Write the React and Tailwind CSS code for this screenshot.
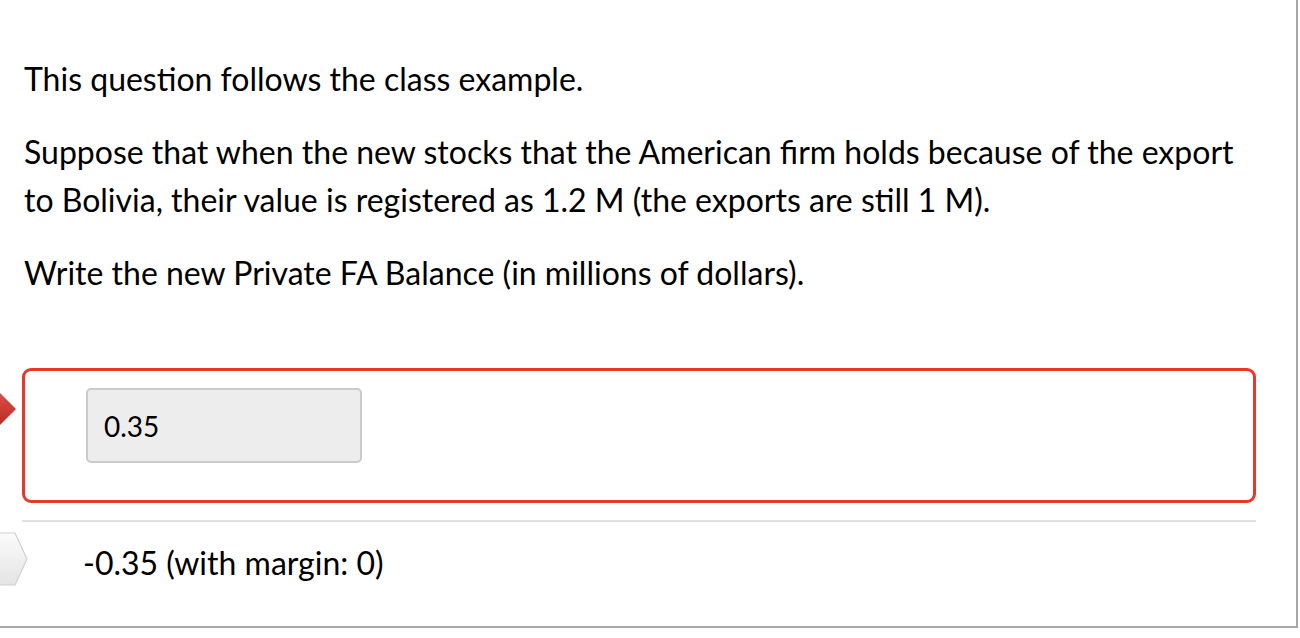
import React from "react";

const paragraphs = [
  "This question follows the class example.",
  "Suppose that when the new stocks that the American firm holds because of the export to Bolivia, their value is registered as 1.2 M (the exports are still 1 M).",
  "Write the new Private FA Balance (in millions of dollars).",
];

const WrongMarker = () => (
  <svg className="absolute left-0 top-[17px]" width="18" height="48" viewBox="0 0 18 48">
    <defs>
      <linearGradient id="redg" x1="0" y1="0" x2="0" y2="1">
        <stop offset="0" stopColor="#e2574c" />
        <stop offset="1" stopColor="#b3231b" />
      </linearGradient>
    </defs>
    <polygon points="-8,0 16,24 -8,48 -32,24" fill="url(#redg)" />
  </svg>
);

const AnswerTag = () => (
  <svg className="absolute left-0 top-[10px]" width="30" height="55" viewBox="0 0 30 55">
    <defs>
      <linearGradient id="grayg" x1="0" y1="0" x2="0" y2="1">
        <stop offset="0" stopColor="#fbfbfb" />
        <stop offset="1" stopColor="#e4e4e4" />
      </linearGradient>
    </defs>
    <polygon points="-4,1 15,1 27,27 15,53 -4,53" fill="url(#grayg)" stroke="#cfcfcf" strokeWidth="1.2" />
  </svg>
);

const App = () => {
  return (
    <div className="w-[1298px] h-[628px] bg-white border-r-2 border-b-2 border-[#a8a8a8] font-['Lato',sans-serif] text-black overflow-hidden">
      <div className="pl-[24px] pr-[40px] pt-[55px] space-y-[25px] text-[32px] leading-[48px]">
        {paragraphs.map((p, i) => (
          <p key={i}>{p}</p>
        ))}
      </div>

      <div className="relative mt-[71px]">
        <WrongMarker />
        <div className="ml-[22px] mr-[40px] h-[135px] border-[3px] border-[#e8382b] rounded-[9px] pl-[61px] pt-[17px]">
          <div className="w-[276px] h-[75px] bg-[#ededed] border-2 border-[#cbcbcb] rounded-[5px] flex items-center pl-[16px] text-[28px] text-black">
            0.35
          </div>
        </div>
      </div>

      <div className="ml-[22px] mr-[40px] mt-[17px] h-[2px] bg-[#e2e2e2]" />

      <div className="relative pt-[17px]">
        <AnswerTag />
        <p className="pl-[83px] text-[32px] leading-[48px]">-0.35 (with margin: 0)</p>
      </div>
    </div>
  );
};

export default App;
